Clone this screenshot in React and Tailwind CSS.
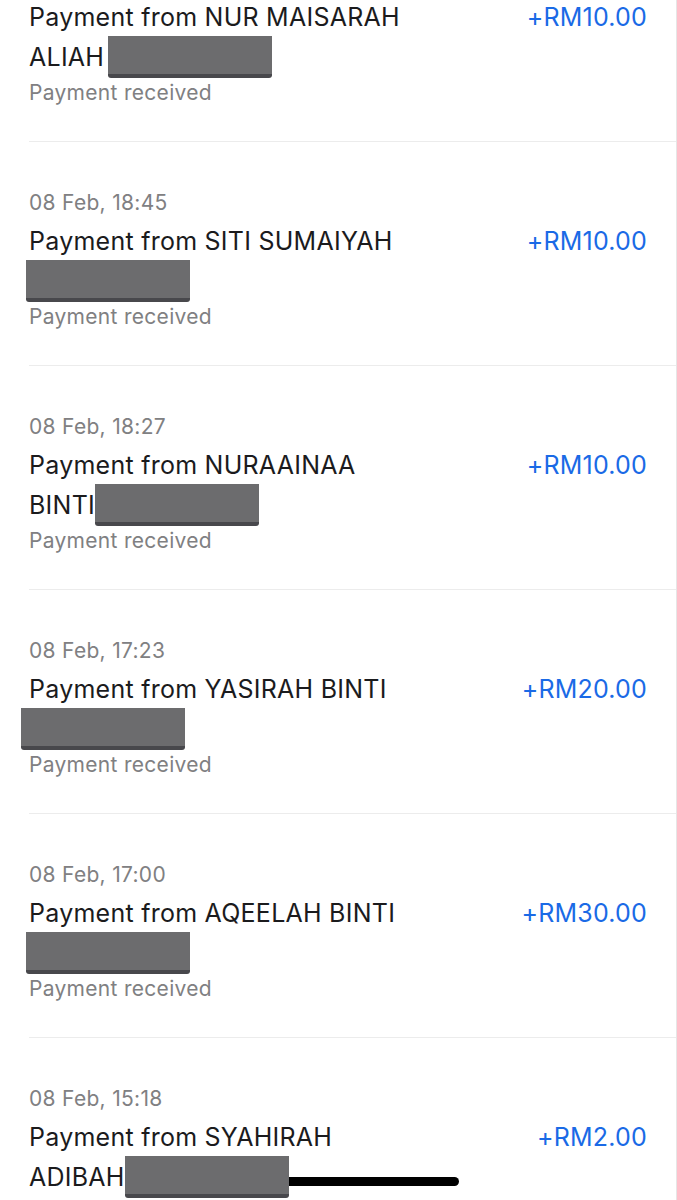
const payments = [
  { date: '08 Feb, 19:02', line1: 'Payment from NUR MAISARAH', line2: 'ALIAH', amount: '+RM10.00', boxOffset: 'ml-[4px]' },
  { date: '08 Feb, 18:45', line1: 'Payment from SITI SUMAIYAH', line2: '', amount: '+RM10.00', boxOffset: '-ml-[3px]' },
  { date: '08 Feb, 18:27', line1: 'Payment from NURAAINAA', line2: 'BINTI', amount: '+RM10.00', boxOffset: 'ml-[0px]' },
  { date: '08 Feb, 17:23', line1: 'Payment from YASIRAH BINTI', line2: '', amount: '+RM20.00', boxOffset: '-ml-[8px]' },
  { date: '08 Feb, 17:00', line1: 'Payment from AQEELAH BINTI', line2: '', amount: '+RM30.00', boxOffset: '-ml-[3px]' },
  { date: '08 Feb, 15:18', line1: 'Payment from SYAHIRAH', line2: 'ADIBAH', amount: '+RM2.00', boxOffset: 'ml-[0px]' },
];

const Redacted = ({ className }) => (
  <span
    className={`relative z-10 inline-block align-middle w-[164px] h-[42px] bg-[#6c6c6e] border-b-[4px] border-[#48484c] rounded-b-[3px] ${className}`}
  />
);

const PaymentRow = ({ item }) => (
  <div className="ml-[29px] border-b border-[#ececec] pt-[43px] pb-[32px] flex">
    <div className="flex-1">
      <div className="h-[36px] leading-[36px] text-[21px] tracking-[0.3px] text-[#808082]">{item.date}</div>
      <div className="h-[40px] leading-[40px] text-[25px] tracking-[0.25px] text-[#1b1b1d]">{item.line1}</div>
      <div className="h-[40px] flex items-center text-[25px] tracking-[0.25px] text-[#1b1b1d]">
        {item.line2 && <span className="leading-[40px]">{item.line2}</span>}
        <Redacted className={item.boxOffset} />
      </div>
      <div className="h-[32px] leading-[32px] text-[21px] tracking-[0.3px] text-[#808082]">Payment received</div>
    </div>
    <div className="pt-[36px] pr-[29px] h-[76px] leading-[40px] text-[25px] tracking-[0.2px] text-[#1a6ae6]">{item.amount}</div>
  </div>
);

export default function App() {
  return (
    <div
      className="relative w-[677px] h-[1200px] overflow-hidden bg-white border-r border-[#e6e6e6]"
      style={{ fontFamily: 'Inter, "Noto Sans", sans-serif' }}
    >
      <div className="-mt-[82px]">
        {payments.map((p) => (
          <PaymentRow key={p.date} item={p} />
        ))}
      </div>
      <div className="absolute left-[218px] top-[1177px] w-[241px] h-[9px] rounded-full bg-black" />
    </div>
  );
}
